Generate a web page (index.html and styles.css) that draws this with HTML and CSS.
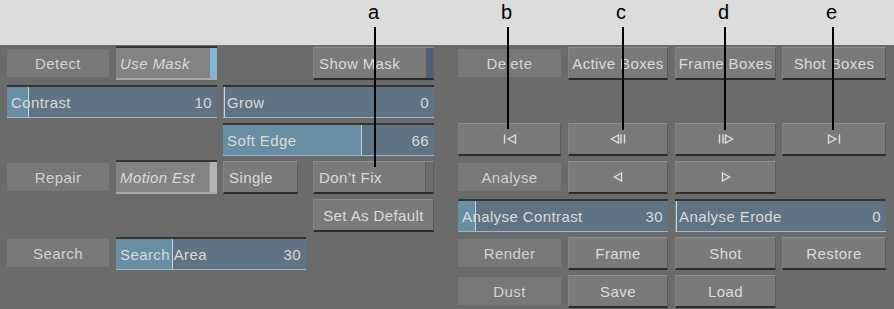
FILE: index.html
```html
<!DOCTYPE html>
<html lang="en">
<head>
    <meta charset="UTF-8">
    <title>Dust Removal</title>
    <link rel="stylesheet" href="styles.css">
</head>
<body>
    <div class="top-band"></div>
    <div class="panel">
        <div class="grid left-grid">
            <div class="cell flat c1 r1">Detect</div>
            <div class="cell toggle c2 r1"><span class="it">Use Mask</span><i class="tick blue"></i></div>
            <div class="cell btn strip left c4 r1">Show Mask<i class="tail navy"></i></div>

            <div class="cell slider c1-2 r2"><i class="fill" style="width:21px"></i><span>Contrast</span><b>10</b></div>
            <div class="cell slider c3-4 r2"><i class="fill" style="width:1px"></i><span>Grow</span><b>0</b></div>

            <div class="cell slider c3-4 r3"><i class="fill" style="width:138px"></i><span>Soft Edge</span><b>66</b></div>

            <div class="cell flat c1 r4">Repair</div>
            <div class="cell toggle c2 r4"><span class="it">Motion Est</span><i class="tick grey"></i></div>
            <div class="cell btn left c3 r4">Single</div>
            <div class="cell btn strip left c4 r4">Don’t Fix<i class="tail dark"></i></div>

            <div class="cell btn c4 r5">Set As Default</div>

            <div class="cell flat c1 r6">Search</div>
            <div class="cell slider c2-3 r6"><i class="fill" style="width:56px"></i><span>Search Area</span><b>30</b></div>
        </div>

        <div class="grid right-grid">
            <div class="cell flat c1 r1">Delete</div>
            <div class="cell btn c2 r1">Active Boxes</div>
            <div class="cell btn c3 r1">Frame Boxes</div>
            <div class="cell btn c4 r1">Shot Boxes</div>

            <div class="cell btn c1 r3">
                <svg width="14" height="10" viewBox="0 0 14 10"><path d="M1.5 0.5v9" /><path d="M12.5 1L5 5l7.5 4z" /></svg>
            </div>
            <div class="cell btn c2 r3">
                <svg width="16" height="10" viewBox="0 0 16 10"><path d="M8.5 1L1.5 5l7 4z" /><path d="M11 0.5v9M14.5 0.5v9" /></svg>
            </div>
            <div class="cell btn c3 r3">
                <svg width="16" height="10" viewBox="0 0 16 10"><path d="M1.5 0.5v9M5 0.5v9" /><path d="M7.5 1l7 4-7 4z" /></svg>
            </div>
            <div class="cell btn c4 r3">
                <svg width="14" height="10" viewBox="0 0 14 10"><path d="M1.5 1L9 5l-7.5 4z" /><path d="M12.5 0.5v9" /></svg>
            </div>

            <div class="cell flat c1 r4">Analyse</div>
            <div class="cell btn c2 r4">
                <svg width="10" height="10" viewBox="0 0 10 10"><path d="M8.5 1L1.5 5l7 4z" /></svg>
            </div>
            <div class="cell btn c3 r4">
                <svg width="10" height="10" viewBox="0 0 10 10"><path d="M1.5 1l7 4-7 4z" /></svg>
            </div>

            <div class="cell slider c1-2 r5"><i class="fill" style="width:17px"></i><span>Analyse Contrast</span><b>30</b></div>
            <div class="cell slider c3-4 r5"><i class="fill" style="width:1px"></i><span>Analyse Erode</span><b>0</b></div>

            <div class="cell flat c1 r6">Render</div>
            <div class="cell btn c2 r6">Frame</div>
            <div class="cell btn c3 r6">Shot</div>
            <div class="cell btn c4 r6">Restore</div>

            <div class="cell flat c1 r7">Dust</div>
            <div class="cell btn c2 r7">Save</div>
            <div class="cell btn c3 r7">Load</div>
        </div>
    </div>

    <!-- callouts -->
    <div class="callout" style="left:375px;height:140px"><span>a</span></div>
    <div class="callout" style="left:508px;height:102px"><span>b</span></div>
    <div class="callout" style="left:623px;height:103px"><span>c</span></div>
    <div class="callout" style="left:725px;height:103px"><span>d</span></div>
    <div class="callout" style="left:833px;height:103px"><span>e</span></div>
</body>
</html>
```

FILE: styles.css
```css
body {
    margin: 0;
    width: 894px;
    height: 309px;
    overflow: hidden;
    background-color: #6b6b6b;
    font-family: "Liberation Sans", Arial, sans-serif;
    position: relative;
}
.top-band {
    height: 45px;
    background-color: #dcdcdc;
}
.panel {
    display: flex;
    padding: 1px 0 0 7px;
    gap: 24px;
}
.grid {
    display: grid;
    grid-template-rows: repeat(7, 34px);
    row-gap: 4px;
}
.left-grid {
    grid-template-columns: 102px 7px 101px 6px 75px 8px 7px 121px;
}
.right-grid {
    grid-template-columns: 103px 7px 100px 7px 101px 6px 104px;
}
.left-grid .c1 { grid-column: 1 / 2; }
.left-grid .c2 { grid-column: 3 / 4; }
.left-grid .c3 { grid-column: 5 / 6; }
.left-grid .c4 { grid-column: 8 / 9; }
.left-grid .c1-2 { grid-column: 1 / 4; }
.left-grid .c2-3 { grid-column: 3 / 7; }
.left-grid .c3-4 { grid-column: 5 / 9; }
.right-grid .c1 { grid-column: 1 / 2; }
.right-grid .c2 { grid-column: 3 / 4; }
.right-grid .c3 { grid-column: 5 / 6; }
.right-grid .c4 { grid-column: 7 / 8; }
.right-grid .c1-2 { grid-column: 1 / 4; }
.right-grid .c3-4 { grid-column: 5 / 8; }
.r1 { grid-row: 1; }
.r2 { grid-row: 2; }
.r3 { grid-row: 3; }
.r4 { grid-row: 4; }
.r5 { grid-row: 5; }
.r6 { grid-row: 6; }
.r7 { grid-row: 7; }

.cell {
    box-sizing: border-box;
    display: flex;
    align-items: center;
    justify-content: center;
    font-size: 15px;
    letter-spacing: 0.4px;
    color: #dadada;
    white-space: nowrap;
    position: relative;
    overflow: hidden;
}
.flat {
    margin: 3px 0 3px 0;
    background-color: #787878;
    color: #d2d2d2;
}
.btn {
    margin-top: 1px;
    background-color: #7a7a7a;
    border-top: 1px solid #8e8e8e;
    border-left: 1px solid #838383;
    border-right: 1px solid #5c5c5c;
    border-bottom: 2px solid #2c2c2c;
}
.btn.left {
    justify-content: flex-start;
    padding-left: 5px;
}
.btn.strip {
    padding-right: 8px;
}
.tail {
    position: absolute;
    right: 0;
    top: 0;
    bottom: 0;
    width: 7px;
}
.tail.navy { background-color: #4d5f79; }
.tail.dark { background-color: #6c6c6c; border-left: 1px solid #5a5a5a; }

.toggle {
    background-color: #838383;
    border-top: 2px solid #353535;
    border-bottom: 2px solid #a9a9a9;
    justify-content: flex-start;
    padding-left: 4px;
}
.it {
    font-style: italic;
}
.tick {
    position: absolute;
    right: 0;
    top: 0;
    bottom: 0;
    width: 7px;
}
.tick.blue { background-color: #86b3cf; border-left: 1px solid #6a8ca2; }
.tick.grey { background-color: #b4b4b4; border-left: 1px solid #929292; }

.slider {
    margin-top: 1px;
    background-color: #5f7384;
    border-top: 2px solid #363636;
    border-bottom: 1px solid #a2b4c6;
    justify-content: space-between;
    padding: 0 5px 0 4px;
}
.slider .fill {
    position: absolute;
    left: 0;
    top: 0;
    bottom: 0;
    background-color: #678ea2;
    border-right: 1px solid #c8d2da;
}
.slider span,
.slider b {
    position: relative;
    font-weight: normal;
}

.cell svg {
    fill: none;
    stroke: #dedede;
    stroke-width: 1.4;
}

.callout {
    position: absolute;
    top: 27px;
    width: 2px;
    margin-left: -1px;
    background-color: #000;
}
.callout span {
    position: absolute;
    top: -27px;
    left: -6px;
    font-family: "Liberation Sans", Arial, sans-serif;
    font-size: 20px;
    line-height: 24px;
    color: #000;
}
```
